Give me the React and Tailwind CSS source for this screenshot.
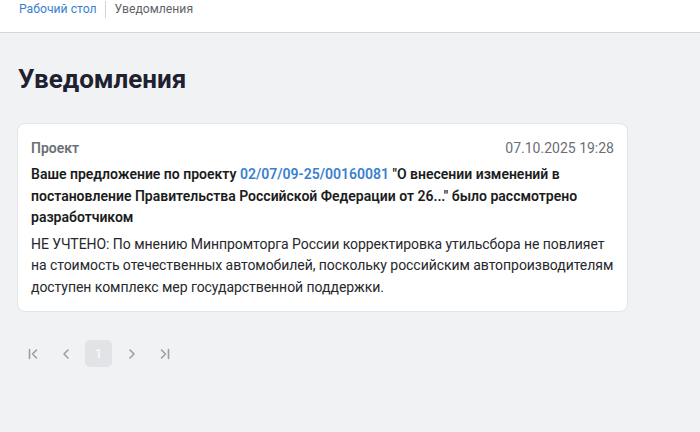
import React from 'react';

const PagerIcon = ({ d }) => (
  <svg width="16" height="16" viewBox="0 0 16 16" fill="none" stroke="currentColor" strokeWidth="1.6" strokeLinecap="round" strokeLinejoin="round">
    <path d={d} />
  </svg>
);

const App = () => {
  return (
    <div className="min-h-screen bg-[#f1f2f4] font-['Roboto',sans-serif]">
      {/* Breadcrumbs */}
      <div className="h-[33px] bg-white border-b border-[#d4d6da] flex items-start pl-[19px] pt-[1px] text-[12.2px]">
        <span className="text-[#3b7fd0] leading-[16px] pr-[8px]">Рабочий стол</span>
        <span className="w-px h-[17px] bg-[#d0d3d8]"></span>
        <span className="text-[#5f6368] leading-[16px] pl-[9px]">Уведомления</span>
      </div>

      <div className="px-[17px]">
        <h1 className="mt-[30px] text-[26px] leading-[32px] font-bold text-[#1d2130] pl-[1px]">Уведомления</h1>

        {/* Notification card */}
        <div className="mt-[28px] w-[611px] bg-white border border-[#e3e5e8] rounded-[8px] pl-[13px] pr-[12px] pt-[14px] pb-[13px]">
          <div className="flex justify-between items-center text-[14px] leading-[20px] pr-[1px]">
            <span className="font-semibold text-[#6b6f76]">Проект</span>
            <span className="text-[#6b6f76]">07.10.2025 19:28</span>
          </div>
          <p className="mt-[6px] text-[14px] leading-[21.5px] font-semibold text-[#1a1c20]">
            Ваше предложение по проекту <span className="text-[#3b7fd0]">02/07/09-25/00160081</span> "О внесении изменений в постановление Правительства Российской Федерации от 26..." было рассмотрено разработчиком
          </p>
          <p className="mt-[5px] text-[14px] leading-[21.5px] tracking-[-0.05px] text-[#26282c]">
            НЕ УЧТЕНО: По мнению Минпромторга России корректировка утильсбора не повлияет на стоимость отечественных автомобилей, поскольку российским автопроизводителям доступен комплекс мер государственной поддержки.
          </p>
        </div>

        {/* Pagination */}
        <div className="mt-[28px] flex items-center gap-[6px] pl-[2px] text-[#9a9ea5]">
          <span className="w-[27px] h-[27px] flex items-center justify-center"><PagerIcon d="M4.5 3.5v9M11.5 4L7.5 8l4 4" /></span>
          <span className="w-[27px] h-[27px] flex items-center justify-center"><PagerIcon d="M10 4L6 8l4 4" /></span>
          <span className="w-[27px] h-[27px] rounded-[5px] bg-[#e1e3e6] text-white text-[13px] flex items-center justify-center">1</span>
          <span className="w-[27px] h-[27px] flex items-center justify-center"><PagerIcon d="M6 4l4 4-4 4" /></span>
          <span className="w-[27px] h-[27px] flex items-center justify-center"><PagerIcon d="M4.5 4l4 4-4 4M11.5 3.5v9" /></span>
        </div>
      </div>
    </div>
  );
};

export default App;
